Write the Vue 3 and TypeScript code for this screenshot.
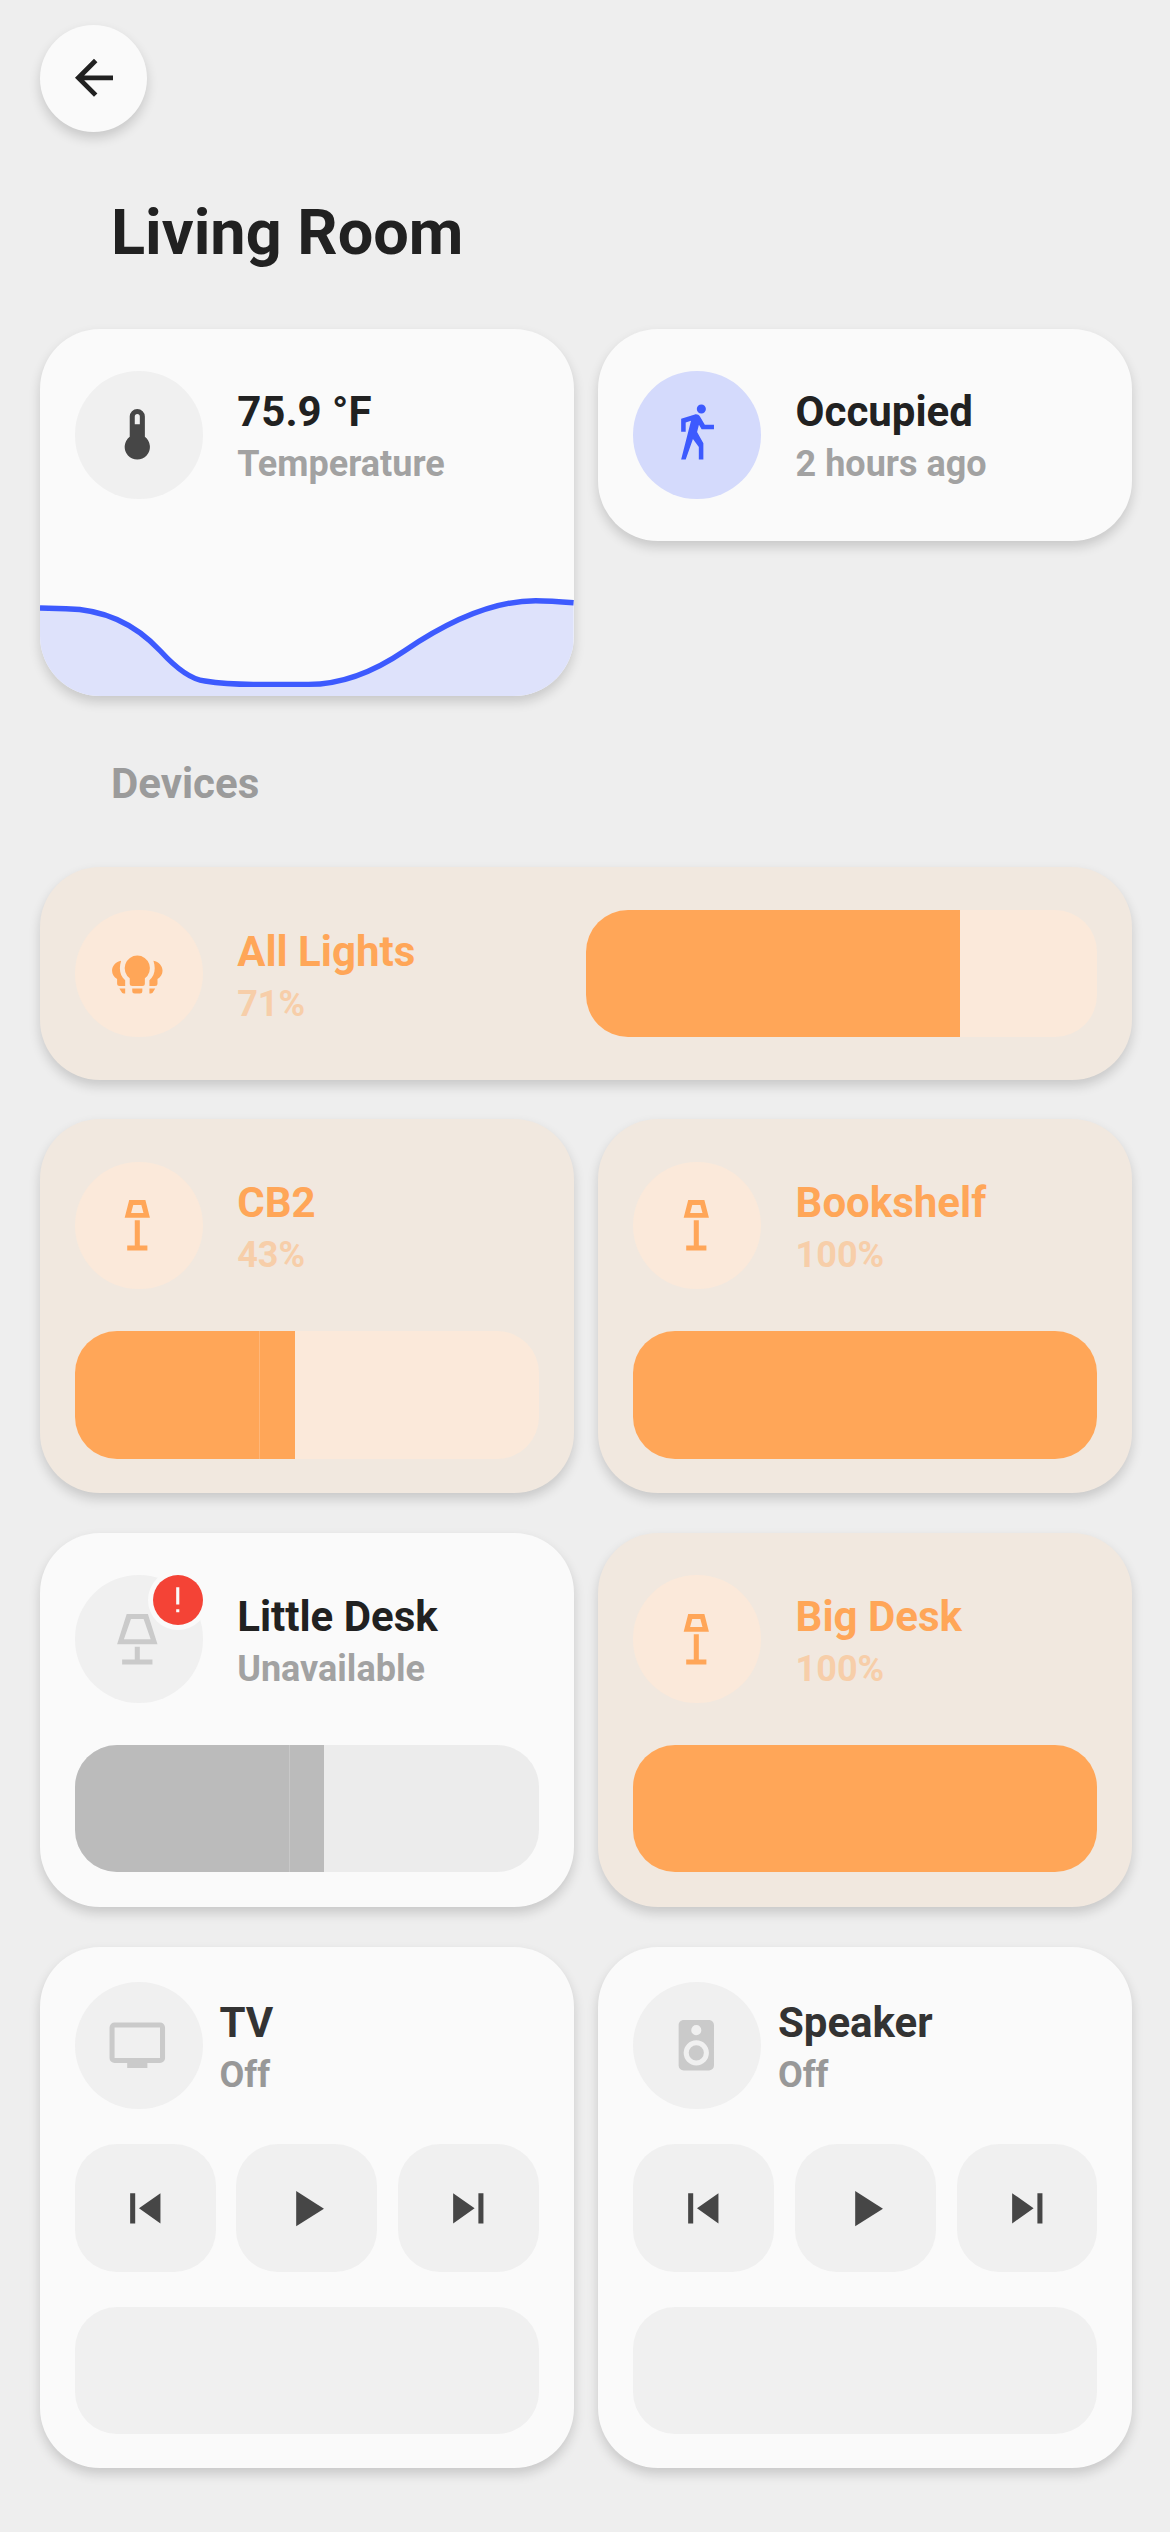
<script setup lang="ts">
interface Light {
  name: string
  state: string
  icon: string
  on: boolean
  level: number
  seam?: number
  alert?: boolean
}

interface Player {
  name: string
  state: string
  icon: string
}

const icons: Record<string, string> = {
  back: 'M20 11V13H8L13.5 18.5L12.08 19.92L4.16 12L12.08 4.08L13.5 5.5L8 11H20Z',
  thermometer:
    'M15 13V5A3 3 0 0 0 9 5V13A5 5 0 1 0 15 13M12 4A1 1 0 0 1 13 5V8H11V5A1 1 0 0 1 12 4Z',
  walk: 'M14.12 10H19V8.2H15.38L13.38 4.87C13.08 4.37 12.54 4.03 11.92 4.03C11.74 4.03 11.58 4.06 11.42 4.11L6 5.8V11H7.8V7.33L9.91 6.67L6 22H7.8L10.67 13.89L13 17V22H14.8V15.59L12.31 11.05L13.04 8.18M14 3.8C15 3.8 15.8 3 15.8 2C15.8 1 15 0.2 14 0.2C13 0.2 12.2 1 12.2 2C12.2 3 13 3.8 14 3.8Z',
  bulbs:
    'M12 5A5 5 0 0 0 9 14V16A1 1 0 0 0 10 17H14A1 1 0 0 0 15 16V14A5 5 0 0 0 12 5ZM10 18H14V19A1 1 0 0 1 13 20H11A1 1 0 0 1 10 19ZM5.6 7C3.5 7.3 2 9 2 11C2 12.4 2.8 13.6 4 14.3V16A1 1 0 0 0 5 17H7.2V14.8C5.8 13.6 5.1 11.9 5.1 10C5.1 9 5.3 8 5.6 7ZM4.9 18H7.2V20H6.7A1 1 0 0 1 5.7 19.3ZM18.4 7C20.5 7.3 22 9 22 11C22 12.4 21.2 13.6 20 14.3V16A1 1 0 0 1 19 17H16.8V14.8C18.2 13.6 18.9 11.9 18.9 10C18.9 9 18.7 8 18.4 7ZM19.1 18H16.8V20H17.3A1 1 0 0 0 18.3 19.3Z',
  floorLamp:
    'M8.8 2H15.2L17 9H7ZM10.4 4L9.55 7.1H14.45L13.6 4ZM11 10H13V20H16V22H8V20H11Z',
  tableLamp:
    'M7.8 2H16.2L20 14H4ZM9.5 4L6.7 12H17.3L14.5 4ZM11 15H13V20H18V22H6V20H11Z',
  tv: 'M21 17H3V5H21M21 3H3A2 2 0 0 0 1 5V17A2 2 0 0 0 3 19H8V21H16V19H21A2 2 0 0 0 23 17V5A2 2 0 0 0 21 3Z',
  speaker:
    'M12 12A3 3 0 0 0 9 15A3 3 0 0 0 12 18A3 3 0 0 0 15 15A3 3 0 0 0 12 12M12 20A5 5 0 0 1 7 15A5 5 0 0 1 12 10A5 5 0 0 1 17 15A5 5 0 0 1 12 20M12 4A2 2 0 0 1 14 6A2 2 0 0 1 12 8C10.89 8 10 7.1 10 6A2 2 0 0 1 12 4M17 2H7C5.89 2 5 2.89 5 4V20A2 2 0 0 0 7 22H17A2 2 0 0 0 19 20V4C19 2.89 18.1 2 17 2Z',
  previous: 'M6 18V6H8V18H6M9.5 12L18 6V18L9.5 12Z',
  play: 'M8 5.14V19.14L19 12.14L8 5.14Z',
  next: 'M16 18H18V6H16M6 18L14.5 12L6 6V18Z',
  alert: 'M11 4H13V15H11ZM11 18H13V20H11Z',
}

const lights: Light[] = [
  { name: 'CB2', state: '43%', icon: 'floorLamp', on: true, level: 47.4, seam: 39.7 },
  { name: 'Bookshelf', state: '100%', icon: 'floorLamp', on: true, level: 100 },
  { name: 'Little Desk', state: 'Unavailable', icon: 'tableLamp', on: false, level: 53.8, seam: 46.1, alert: true },
  { name: 'Big Desk', state: '100%', icon: 'floorLamp', on: true, level: 100 },
]

const players: Player[] = [
  { name: 'TV', state: 'Off', icon: 'tv' },
  { name: 'Speaker', state: 'Off', icon: 'speaker' },
]

const controls = ['previous', 'play', 'next']

// Temperature history curve, drawn in a 534 x 107 box.
const linePath =
  'M0 19L26 19.7Q82 20.5 120.5 62Q146 90 165 92Q185 95.2 213.5 95.4' +
  'H268.6Q315.6 95.4 365 61.7Q438.5 11.7 496 11.7Q510 11.7 534 13.8'
const areaPath = `${linePath}V107H0Z`
</script>

<template>
  <main class="room">
    <button class="back" aria-label="Back">
      <svg viewBox="0 0 24 24"><path :d="icons.back" /></svg>
    </button>

    <h1>Living Room</h1>

    <section class="grid sensors">
      <article class="card temperature">
        <div class="head">
          <span class="disc"><svg class="icon" viewBox="0 0 24 24"><path :d="icons.thermometer" /></svg></span>
          <div class="label">
            <strong>75.9 °F</strong>
            <small>Temperature</small>
          </div>
        </div>
        <svg class="graph" viewBox="0 0 534 107" preserveAspectRatio="none">
          <path class="area" :d="areaPath" />
          <path class="line" :d="linePath" />
        </svg>
      </article>
      <article class="card occupancy">
        <div class="head">
          <span class="disc"><svg class="icon" viewBox="0 0 24 24"><path :d="icons.walk" /></svg></span>
          <div class="label">
            <strong>Occupied</strong>
            <small>2 hours ago</small>
          </div>
        </div>
      </article>
    </section>

    <h2>Devices</h2>

    <article class="card lit all">
      <div class="head">
        <span class="disc"><svg class="icon" viewBox="0 0 24 24"><path :d="icons.bulbs" /></svg></span>
        <div class="label">
          <strong>All Lights</strong>
          <small>71%</small>
        </div>
      </div>
      <div class="slider"><div class="fill" :style="{ width: '73.1%' }"></div></div>
    </article>

    <section class="grid">
      <article v-for="light in lights" :key="light.name" class="card light" :class="light.on ? 'lit' : 'unavailable'">
        <div class="head">
          <span class="disc">
            <svg class="icon" viewBox="0 0 24 24"><path fill-rule="evenodd" :d="icons[light.icon]" /></svg>
            <span v-if="light.alert" class="badge">
              <svg viewBox="0 0 24 24"><path :d="icons.alert" /></svg>
            </span>
          </span>
          <div class="label">
            <strong>{{ light.name }}</strong>
            <small>{{ light.state }}</small>
          </div>
        </div>
        <div class="slider">
          <div class="fill" :style="{ width: light.level + '%' }"></div>
          <i v-if="light.seam" class="seam" :style="{ left: light.seam + '%' }"></i>
        </div>
      </article>

      <article v-for="player in players" :key="player.name" class="card player">
        <div class="head">
          <span class="disc"><svg class="icon" viewBox="0 0 24 24"><path :d="icons[player.icon]" /></svg></span>
          <div class="label">
            <strong>{{ player.name }}</strong>
            <small>{{ player.state }}</small>
          </div>
        </div>
        <div class="controls">
          <button v-for="control in controls" :key="control" :aria-label="control">
            <svg class="icon" viewBox="0 0 24 24"><path :d="icons[control]" /></svg>
          </button>
        </div>
        <div class="volume"></div>
      </article>
    </section>
  </main>
</template>

<style>
body {
  background: #eeeeee;
}
</style>

<style scoped>
.room {
  box-sizing: border-box;
  width: 1170px;
  height: 2532px;
  padding: 25px 38px 0 40px;
  background: #eeeeee;
  font-family: Roboto, sans-serif;
  color: #212121;
  overflow: hidden;
}

button {
  display: flex;
  align-items: center;
  justify-content: center;
  padding: 0;
  border: 0;
}

svg {
  display: block;
  fill: currentColor;
}

.back {
  width: 107px;
  height: 107px;
  border-radius: 50%;
  background: #fafafa;
  color: #212121;
  box-shadow: 0 6px 12px rgba(0, 0, 0, 0.16);
}

.back svg {
  width: 57.6px;
  height: 57.6px;
  margin-top: -2px;
}

h1 {
  margin: 62.5px 0 0 71px;
  font-size: 63px;
  line-height: 76px;
  font-weight: 700;
}

h2 {
  margin: 63px 0 0 71px;
  font-size: 42px;
  line-height: 50px;
  font-weight: 700;
  color: #9b9b9b;
}

.grid {
  display: grid;
  grid-template-columns: 533.6px 534px;
  column-gap: 24.8px;
  row-gap: 39.6px;
  align-items: start;
}

.sensors {
  margin-top: 58.5px;
}

.card {
  box-sizing: border-box;
  padding: 42.4px 35px 34.7px;
  border-radius: 60px;
  background: #fafafa;
  box-shadow: 0 6px 12px rgba(0, 0, 0, 0.16);
}

.head {
  display: flex;
  align-items: flex-start;
}

.disc {
  position: relative;
  display: flex;
  flex: none;
  align-items: center;
  justify-content: center;
  width: 127.5px;
  height: 127.5px;
  border-radius: 50%;
  background: #f0f0f0;
  color: #464646;
}

.icon {
  width: 60.6px;
  height: 60.6px;
}

.disc .icon {
  margin-right: 2px;
}

.card:nth-child(even) .disc .icon {
  margin-right: 1px;
}

.label {
  display: flex;
  flex-direction: column;
  padding: 16px 0 0 34.7px;
  white-space: nowrap;
}

.label strong {
  font-size: 42px;
  line-height: 50px;
  font-weight: 700;
}

.label small {
  font-size: 36px;
  line-height: 54px;
  font-weight: 700;
  color: #a2a2a2;
}

.temperature {
  display: flex;
  flex-direction: column;
  justify-content: space-between;
  height: 367px;
  padding: 42px 0 0;
  overflow: hidden;
}

.temperature .head {
  padding-left: 35px;
}

.graph {
  width: 100%;
  height: 107px;
}

.area {
  fill: #dee2fb;
}

.line {
  fill: none;
  stroke: #3d5afe;
  stroke-width: 5.4;
}

.occupancy {
  height: 212px;
  padding-top: 42px;
}

.occupancy .disc {
  background: #d4dafc;
  color: #3d5afe;
}

.lit {
  background: #f1e8df;
  color: #ffa658;
}

.lit .disc {
  background: #fbe9da;
  color: #ffa658;
}

.lit .label small {
  color: #f7cea9;
}

.all {
  display: flex;
  justify-content: space-between;
  width: 1092.2px;
  height: 212.4px;
  margin: 58.3px 0 39.6px;
}

.all .label {
  padding-top: 17.5px;
}

.all .slider {
  width: 511.5px;
}

.light {
  height: 374.2px;
}

.light .label {
  padding-top: 16.4px;
}

.light .slider {
  margin-top: 42px;
}

.slider {
  position: relative;
  height: 127.5px;
  border-radius: 42px;
  background: #fbe9da;
  overflow: hidden;
}

.fill {
  height: 100%;
  background: #ffa658;
}

.seam {
  position: absolute;
  top: 0;
  bottom: 0;
  width: 1px;
  background: rgba(255, 255, 255, 0.2);
}

.unavailable .disc,
.player .disc {
  color: #cacaca;
}

.unavailable .slider {
  background: #ececec;
}

.unavailable .fill {
  background: #bbbbbb;
}

.badge {
  position: absolute;
  top: 0;
  right: 0;
  display: flex;
  align-items: center;
  justify-content: center;
  width: 50px;
  height: 50px;
  border-radius: 50%;
  background: #f44336;
  color: #fafafa;
  box-shadow: 0 0 0 5px #fafafa;
}

.badge svg {
  flex: none;
  width: 37.5px;
  height: 37.5px;
  margin-top: -2px;
}

.player {
  padding-top: 35px;
  height: 521.6px;
}

.player .label {
  padding-left: 17px;
}

.player .label strong {
  color: #333333;
}

.player .label small {
  color: #989898;
}

.controls {
  display: flex;
  justify-content: space-between;
  margin: 35px 0;
}

.controls button {
  width: 140.8px;
  height: 127.5px;
  border-radius: 42px;
  background: #f0f0f0;
  color: #464646;
}

.volume {
  height: 127px;
  border-radius: 42px;
  background: #f0f0f0;
}
</style>
